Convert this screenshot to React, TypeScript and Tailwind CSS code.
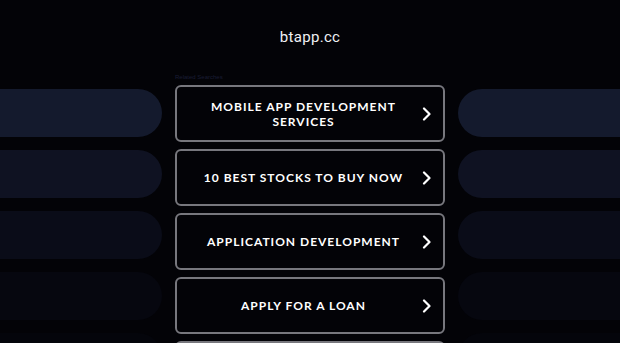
import React from 'react';

const links = [
  'Mobile App Development Services',
  '10 Best Stocks to Buy Now',
  'Application Development',
  'Apply for a Loan',
  'Online Business Degree',
];

// side pills fade out toward the bottom
const pillColors = ['bg-[#141a2d]', 'bg-[#0f1222]', 'bg-[#0a0c18]', 'bg-[#06070f]', 'bg-[#04050b]'];

function Chevron() {
  return (
    <svg width="10" height="14" viewBox="0 0 10 14" fill="none" className="shrink-0">
      <path d="M2 1.5 L7.5 7 L2 12.5" stroke="#ffffff" strokeWidth="2.2" strokeLinecap="round" strokeLinejoin="round" />
    </svg>
  );
}

export default function App() {
  return (
    <div className="w-[620px] h-[343px] overflow-hidden bg-[#030307] font-['Roboto',sans-serif]">
      <div className="pt-[27px] text-center text-[15px] leading-[20px] text-[#f0f0f4] tracking-[0.3px]">
        btapp.cc
      </div>

      <div className="mt-[26px] flex gap-[13px]">
        {/* left pills */}
        <div className="w-[162px] pt-[16px] flex flex-col gap-[13px]">
          {pillColors.map((c, i) => (
            <div key={i} className={`h-[48px] shrink-0 rounded-r-[24px] ${c}`}></div>
          ))}
        </div>

        <div className="w-[270px]">
          <div className="h-[9px] text-[6px] leading-[9px] text-[#1a1d35] font-['Liberation_Sans',sans-serif]">
            Related Searches
          </div>
          <div className="mt-[3px] flex flex-col gap-[7px]">
            {links.map((l) => (
              <div
                key={l}
                className="h-[57px] shrink-0 rounded-[6px] border-2 border-[#77777d] flex items-center pl-[18px] pr-[11px]"
              >
                <div className="flex-1 text-center text-white uppercase font-bold text-[12px] leading-[15px] tracking-[1px] font-['Lato',sans-serif]">
                  {l}
                </div>
                <div className="ml-[10px]">
                  <Chevron />
                </div>
              </div>
            ))}
          </div>
        </div>

        {/* right pills */}
        <div className="flex-1 pt-[16px] flex flex-col gap-[13px]">
          {pillColors.map((c, i) => (
            <div key={i} className={`h-[48px] shrink-0 rounded-l-[24px] ${c}`}></div>
          ))}
        </div>
      </div>
    </div>
  );
}
